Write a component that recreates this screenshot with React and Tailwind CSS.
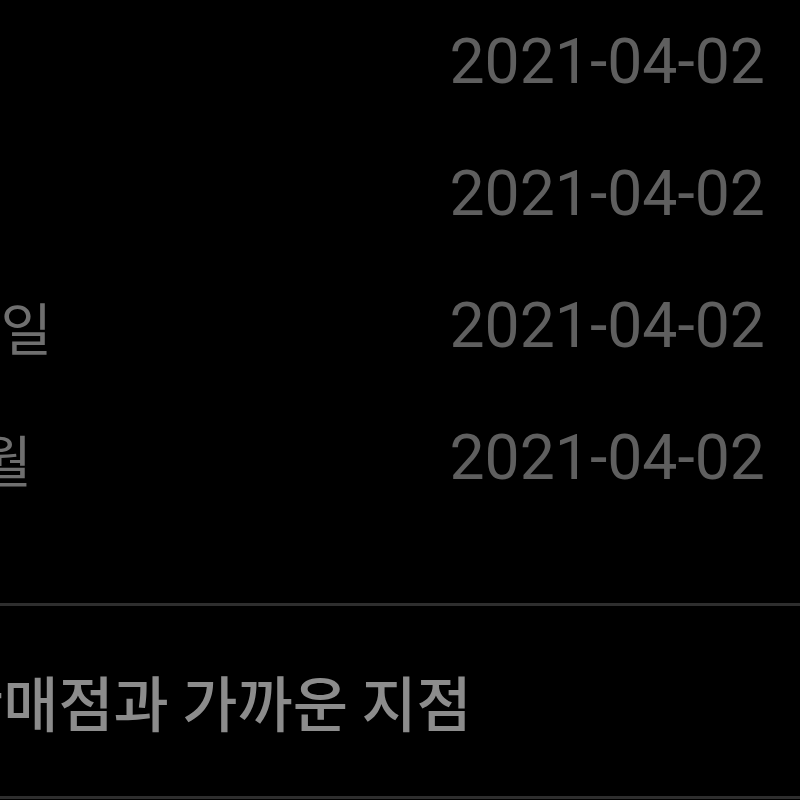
export default function App() {
  const rows = ["시작일", "종료일", "개통일", "가입월"];
  return (
    <div className="w-[800px] h-[800px] bg-black overflow-hidden flex flex-col">
      <div className="flex flex-col mt-[-4px]">
        {rows.map((label, i) => (
          <div key={i} className="h-[132px] flex items-center justify-between">
            <div
              className={
                "text-[56px] text-[#6f6f6f] whitespace-nowrap text-right " +
                (i === 2 ? "ml-[-110px] w-[162px]" : i === 3 ? "ml-[-130px] w-[162px]" : "w-0")
              }
              style={{ fontFamily: '"Noto Sans CJK KR", "Noto Sans", sans-serif' }}
            >
              {i >= 2 ? label : ""}
            </div>
            <div
              className="text-[62.5px] text-[#5f5f5f] pr-[35px] leading-none"
              style={{ fontFamily: 'Roboto, "Liberation Sans", sans-serif' }}
            >
              2021-04-02
            </div>
          </div>
        ))}
      </div>
      <div className="mt-[79px] border-t-[3px] border-[#2e2e2e] h-[193px] flex items-center">
        <div
          className="ml-[-52px] text-[60px] font-medium text-[#8c8c8c] whitespace-nowrap"
          style={{ fontFamily: '"Noto Sans CJK KR", "Noto Sans", sans-serif' }}
        >
          판매점과 가까운 지점
        </div>
      </div>
      <div className="border-t-[3px] border-[#2e2e2e]"></div>
    </div>
  );
}
